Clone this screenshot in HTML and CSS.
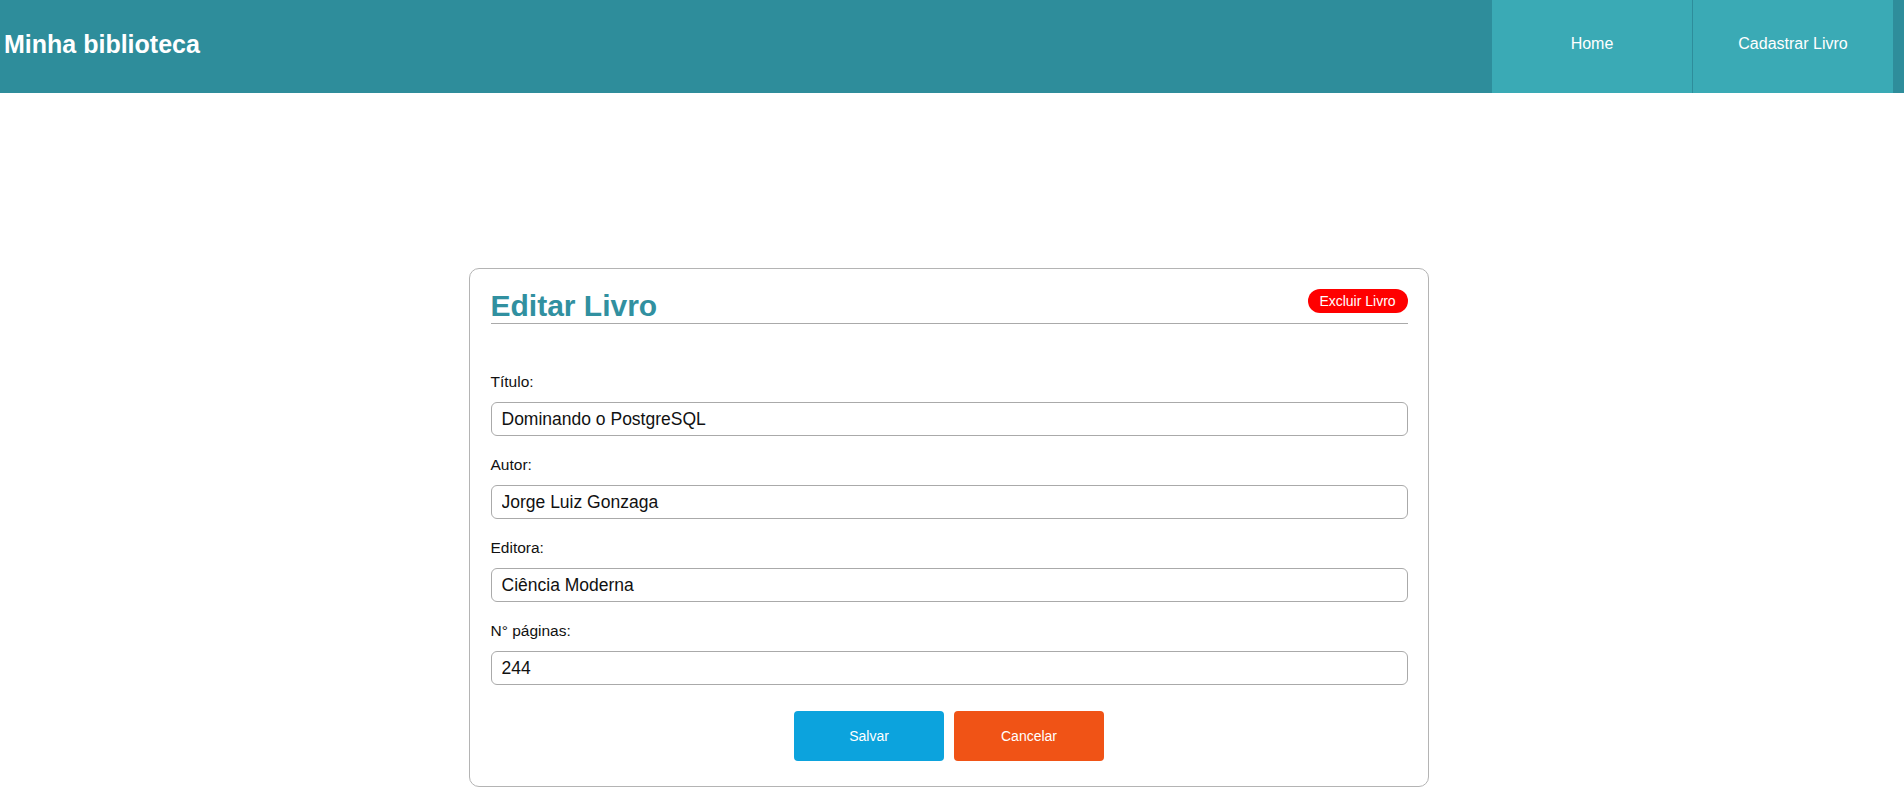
FILE: index.html
```html
<!DOCTYPE html>
<html lang="pt-BR">
<head>
<meta charset="utf-8">
<title>Minha biblioteca</title>
<link rel="stylesheet" href="styles.css">
</head>
<body>
<header class="topbar">
  <h1 class="brand">Minha biblioteca</h1>
  <nav class="nav">
    <a class="nav-item" href="#">Home</a>
    <a class="nav-item nav-item-sep" href="#">Cadastrar Livro</a>
  </nav>
</header>
<main class="page">
  <section class="card">
    <div class="card-head">
      <h2 class="card-title">Editar Livro</h2>
      <button class="btn-delete" type="button">Excluir Livro</button>
    </div>
    <form class="form">
      <div class="field">
        <label class="label">Título:</label>
        <input class="input" type="text" value="Dominando o PostgreSQL">
      </div>
      <div class="field">
        <label class="label">Autor:</label>
        <input class="input" type="text" value="Jorge Luiz Gonzaga">
      </div>
      <div class="field">
        <label class="label">Editora:</label>
        <input class="input" type="text" value="Ciência Moderna">
      </div>
      <div class="field">
        <label class="label">N° páginas:</label>
        <input class="input" type="text" value="244">
      </div>
      <div class="actions">
        <button class="btn btn-save" type="button">Salvar</button>
        <button class="btn btn-cancel" type="button">Cancelar</button>
      </div>
    </form>
  </section>
</main>
</body>
</html>
```
FILE: styles.css
```css
* { box-sizing: border-box; }
html, body { margin: 0; padding: 0; background: #fff; }
body { font-family: "Liberation Sans", Arial, sans-serif; color: #111; }

.topbar {
  height: 93px;
  background: #2e8d9b;
  display: flex;
  align-items: stretch;
  justify-content: space-between;
  padding-left: 4px;
  padding-right: 11px;
}
.brand {
  margin: 0;
  align-self: center;
  color: #fff;
  font-size: 25px;
  font-weight: bold;
  padding-bottom: 5px;
}
.nav { display: flex; }
.nav-item {
  width: 200px;
  display: flex;
  align-items: center;
  justify-content: center;
  background: #3aaab5;
  color: #fff;
  text-decoration: none;
  font-size: 16px;
  padding-bottom: 6px;
}
.nav-item-sep { border-left: 1px solid #2e8d9b; width: 201px; }

.page {
  padding-top: 175px;
  padding-right: 7px;
  padding-bottom: 8px;
}
.card {
  width: 960px;
  margin: 0 auto;
  border: 1px solid #b4b4b4;
  border-radius: 10px;
  padding: 19px 20px 25px 21px;
}
.card-head {
  display: flex;
  justify-content: space-between;
  align-items: flex-start;
  border-bottom: 1px solid #aaa;
}
.card-title {
  margin: 0;
  font-size: 30px;
  line-height: 35px;
  font-weight: bold;
  color: #3190a0;
}
.btn-delete {
  margin-top: 1px;
  width: 100px;
  height: 24px;
  border: none;
  border-radius: 12px;
  background: #ff0000;
  color: #fff;
  font-family: "Liberation Sans", Arial, sans-serif;
  font-size: 14px;
  padding: 0;
}

.form { padding-top: 49px; }
.field { display: flex; flex-direction: column; margin-bottom: 20px; }
.label {
  font-size: 15.5px;
  line-height: 18px;
  color: #111;
  margin-bottom: 11px;
}
.input {
  height: 34px;
  border: 1px solid #aaa;
  border-radius: 6px;
  padding: 0 10px;
  font-family: "Liberation Sans", Arial, sans-serif;
  font-size: 17.5px;
  color: #111;
  background: #fff;
}
.actions {
  display: flex;
  justify-content: center;
  gap: 10px;
  padding-top: 6px;
}
.btn {
  width: 150px;
  height: 50px;
  border: none;
  border-radius: 4px;
  color: #fff;
  font-family: "Liberation Sans", Arial, sans-serif;
  font-size: 14px;
}
.btn-save { background: #0ca3dd; }
.btn-cancel { background: #f05316; }
```
